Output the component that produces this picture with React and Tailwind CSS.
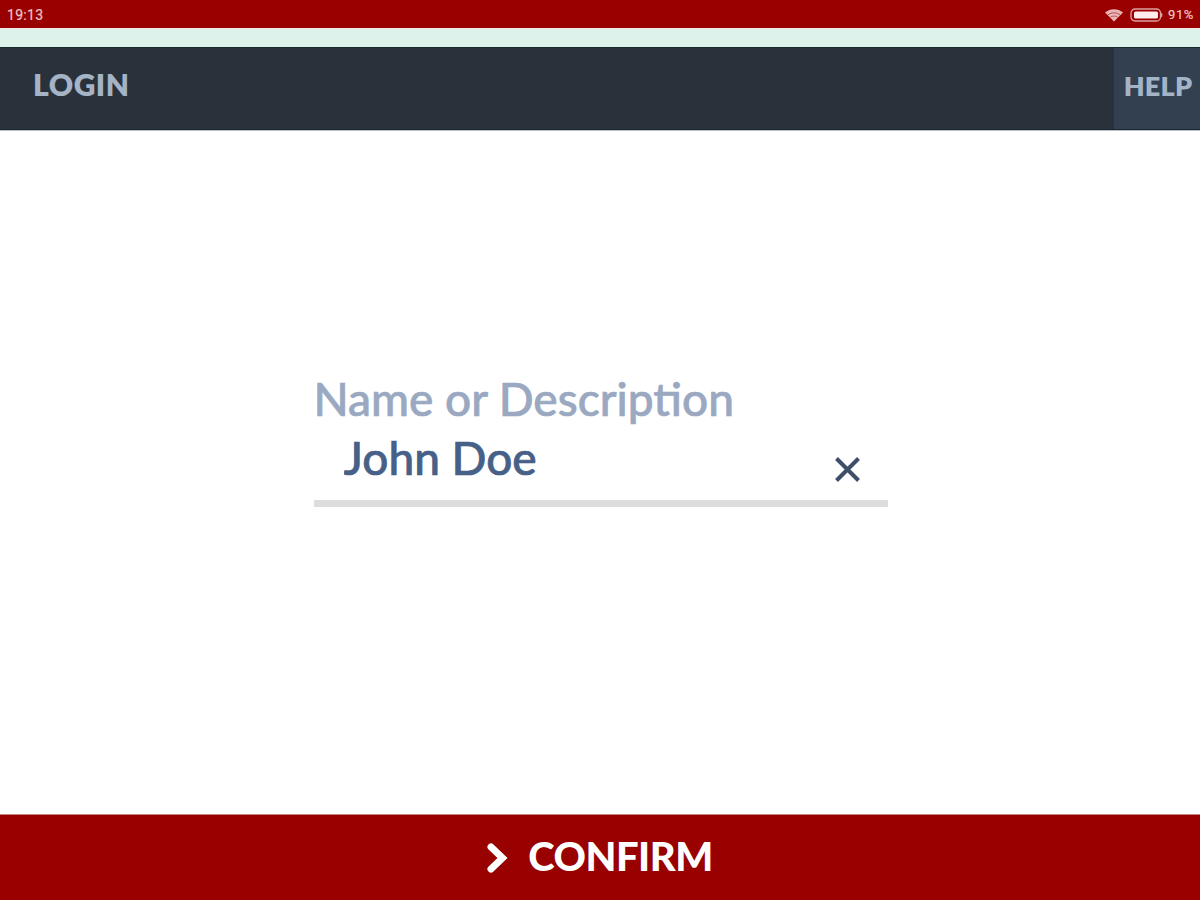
import { useState } from "react";

function StatusBar() {
  return (
    <div className="flex h-7 items-center justify-between bg-[#990000] pl-[7px] pr-[6px] font-[Roboto,sans-serif] text-[#f0c4c4]">
      <span className="pt-[2px] text-[14px] leading-none tracking-[0.3px] [-webkit-text-stroke:0.2px]">19:13</span>
      <div className="flex items-center">
        <svg className="mt-px" width="20" height="14" viewBox="0 0 20 14" fill="none">
          <path d="M1 4.5C6 0 14 0 19 4.5L10 13.5Z" fill="#e9b5b5" />
          <path d="M4 6.8C7.7 4.2 12.3 4.2 16 6.8" stroke="#b95050" strokeWidth="1" />
          <path d="M6.3 9.2C8.5 7.7 11.5 7.7 13.7 9.2" stroke="#c06060" strokeWidth="1" />
        </svg>
        <svg className="ml-[6px] mt-px" width="34" height="14" viewBox="0 0 34 14" fill="none">
          <rect x="1" y="1" width="29.5" height="12" rx="4" stroke="#dda0a0" strokeWidth="1.3" />
          <rect x="4" y="3.5" width="24" height="7" rx="1.5" fill="#ffecec" />
          <path d="M31 4.5C33 5.5 33 8.5 31 9.5Z" fill="#dda0a0" />
        </svg>
        <span className="ml-1 pt-px text-[13px] leading-none tracking-[0.6px] [-webkit-text-stroke:0.2px]">91%</span>
      </div>
    </div>
  );
}

function Header() {
  return (
    <header className="flex h-[83px] border-t border-b border-t-[#18282b] border-b-[#1b2733] bg-[#29313b] text-[#a5b3c7]">
      <h1 className="flex-1 pl-[33px] pt-[18px] text-[30px] font-extrabold leading-9 tracking-[0.5px]">
        LOGIN
      </h1>
      <button className="flex w-[86px] justify-center bg-[#334050] pl-[2px] pt-[20px] text-[27px] font-extrabold leading-9 tracking-[0.2px]">
        HELP
      </button>
    </header>
  );
}

function NameField() {
  const [name, setName] = useState("John Doe");

  return (
    <div className="ml-px w-[574px]">
      <label htmlFor="name" className="block text-[46px] font-medium leading-[58px] text-[#9aa9c1] [-webkit-text-stroke:0.7px]">
        Name or Description
      </label>
      <div className="flex h-[79px] items-start border-b-[7px] border-[#dcdddf] pl-[30px] pr-[28px]">
        <input
          id="name"
          value={name}
          onChange={(e) => setName(e.target.value)}
          className="mt-px h-[58px] min-w-0 flex-1 text-[46px] font-medium leading-[58px] text-[#466087] outline-none [-webkit-text-stroke:0.7px]"
        />
        <button className="mt-[29px]" onClick={() => setName("")} aria-label="Clear">
          <svg width="25" height="25" viewBox="0 0 25 25" fill="none" stroke="#3d4f69" strokeWidth="4">
            <path d="M1.5 1.5L23.5 23.5M23.5 1.5L1.5 23.5" />
          </svg>
        </button>
      </div>
    </div>
  );
}

function App() {
  return (
    <div className="flex h-[900px] w-[1200px] flex-col overflow-hidden bg-white font-[Lato,sans-serif]">
      <StatusBar />
      <div className="h-[19px] border-t border-[#f2e5e4] bg-[#def2ec]" />
      <Header />
      <main className="flex flex-1 flex-col items-center border-t border-[#b9bfc7] pt-[239px]">
        <NameField />
      </main>
      <button className="flex h-[86px] items-start justify-center border-t border-[#c98080] bg-[#990000] pt-[17px] text-white">
        <svg className="mt-[11px] mr-[19px]" width="22" height="30" viewBox="0 0 22 30" fill="none" stroke="white" strokeWidth="7">
          <path d="M4 4L15.5 15L4 26" strokeLinecap="round" />
        </svg>
        <span className="text-[40px] font-black leading-[48px] tracking-[-0.5px]">CONFIRM</span>
      </button>
    </div>
  );
}

export default App;
